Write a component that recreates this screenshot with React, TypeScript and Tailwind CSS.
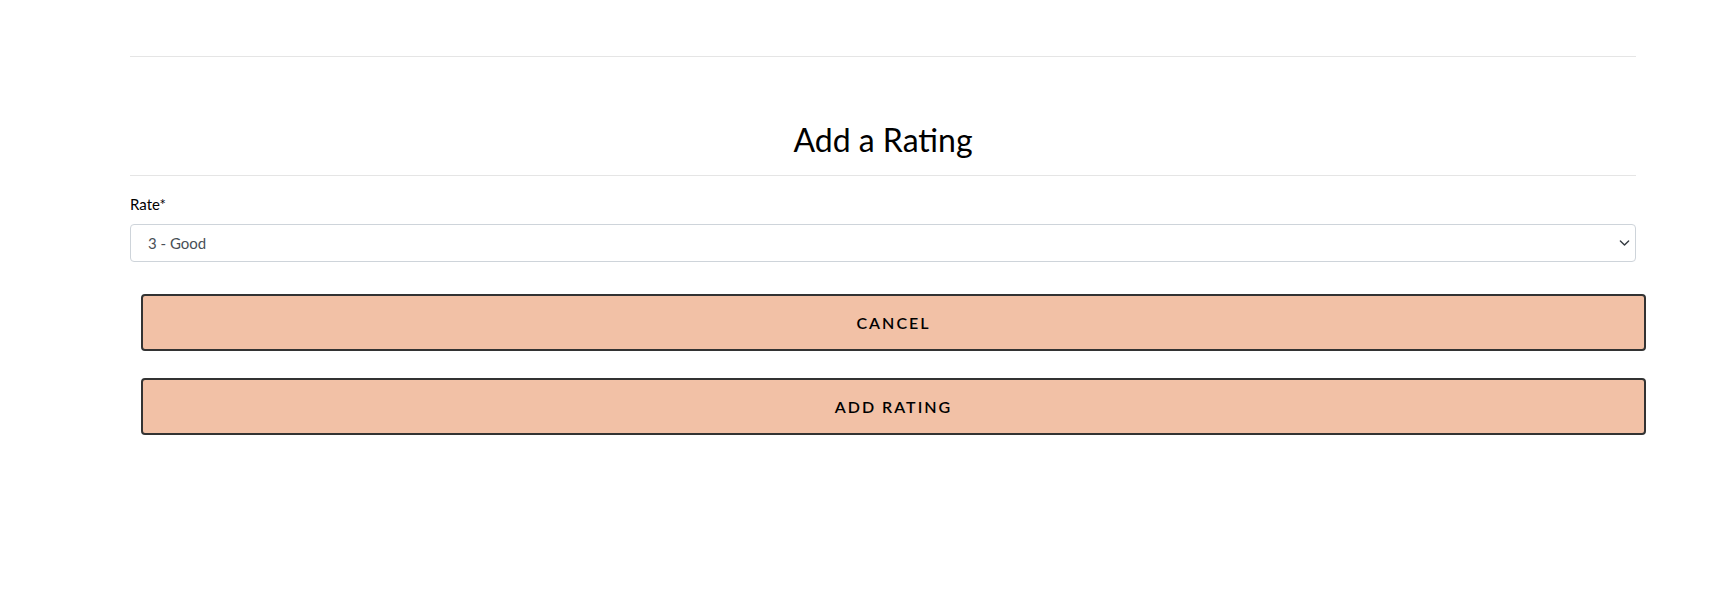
import { useState } from 'react';

const OPTIONS = ['1 - Poor', '2 - Fair', '3 - Good', '4 - Very Good', '5 - Excellent'];

export default function App() {
  const [rate, setRate] = useState('3 - Good');

  return (
    <div className="min-h-[597px] bg-white font-['Lato','Open_Sans',sans-serif] text-black">
      <div className="pl-[130px] pr-[77px] pt-[56px]">
        <hr className="border-0 border-t border-[#e5e5e5]" />

        {/* Heading */}
        <h1 className="mt-[64px] text-center text-[32px] leading-[1.2] font-normal">Add a Rating</h1>
        <hr className="mt-[16px] border-0 border-t border-[#e5e5e5]" />

        {/* Form */}
        <form className="mt-[17px]" onSubmit={e => e.preventDefault()}>
          <label htmlFor="rate" className="block text-[15px] leading-[22px] mb-[9px]">
            Rate*
          </label>
          <div className="relative">
            <select
              id="rate"
              value={rate}
              onChange={e => setRate(e.target.value)}
              className="block h-[38px] w-full appearance-none rounded-[4px] border border-[#ced4da] bg-white pl-[17px] pr-8 text-[15px] text-[#495057] outline-none"
            >
              {OPTIONS.map(o => (
                <option key={o}>{o}</option>
              ))}
            </select>
            <svg
              className="pointer-events-none absolute right-[6px] top-1/2 -translate-y-1/2"
              width="11"
              height="11"
              viewBox="0 0 16 16"
              fill="none"
              stroke="#343a40"
              strokeWidth="2"
              strokeLinecap="round"
              strokeLinejoin="round"
            >
              <path d="M2 5l6 6 6-6" />
            </svg>
          </div>

          <div className="ml-[11px] mr-[-10px] mt-[32px] flex flex-col gap-[27px]">
            <button
              type="button"
              className="h-[57px] w-full rounded-[4px] border-2 border-[#333333] bg-[#f2c1a6] text-[16px] font-semibold uppercase tracking-[2px] text-black"
            >
              Cancel
            </button>
            <button
              type="submit"
              className="h-[57px] w-full rounded-[4px] border-2 border-[#333333] bg-[#f2c1a6] text-[16px] font-semibold uppercase tracking-[2px] text-black"
            >
              Add Rating
            </button>
          </div>
        </form>
      </div>
    </div>
  );
}
